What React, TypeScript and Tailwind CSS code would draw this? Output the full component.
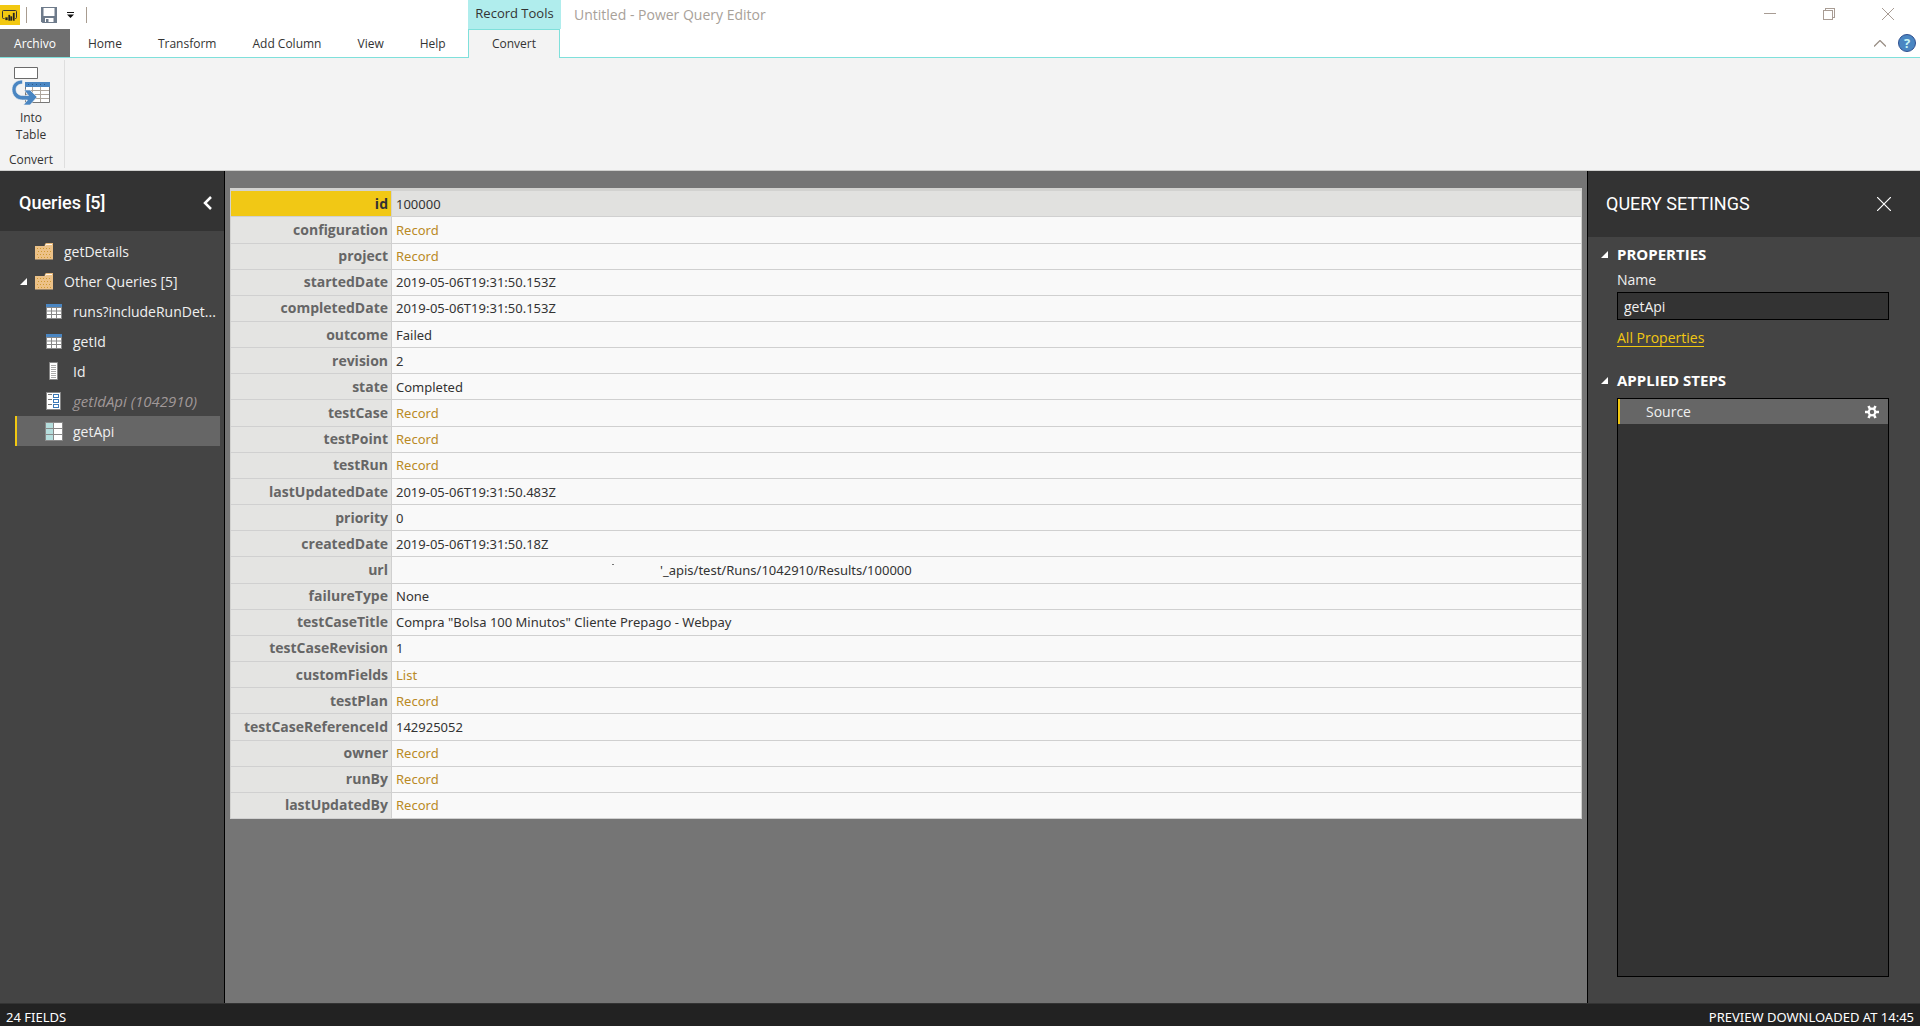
import { useState } from 'react'
import type { ReactNode } from 'react'
import clsx from 'clsx'

type Kind = 'text' | 'link' | 'url'

interface FieldRow {
  name: string
  value: string
  kind?: Kind
}

const FIELDS: FieldRow[] = [
  { name: 'id', value: '100000' },
  { name: 'configuration', value: 'Record', kind: 'link' },
  { name: 'project', value: 'Record', kind: 'link' },
  { name: 'startedDate', value: '2019-05-06T19:31:50.153Z' },
  { name: 'completedDate', value: '2019-05-06T19:31:50.153Z' },
  { name: 'outcome', value: 'Failed' },
  { name: 'revision', value: '2' },
  { name: 'state', value: 'Completed' },
  { name: 'testCase', value: 'Record', kind: 'link' },
  { name: 'testPoint', value: 'Record', kind: 'link' },
  { name: 'testRun', value: 'Record', kind: 'link' },
  { name: 'lastUpdatedDate', value: '2019-05-06T19:31:50.483Z' },
  { name: 'priority', value: '0' },
  { name: 'createdDate', value: '2019-05-06T19:31:50.18Z' },
  { name: 'url', value: '_apis/test/Runs/1042910/Results/100000', kind: 'url' },
  { name: 'failureType', value: 'None' },
  { name: 'testCaseTitle', value: 'Compra "Bolsa 100 Minutos" Cliente Prepago - Webpay' },
  { name: 'testCaseRevision', value: '1' },
  { name: 'customFields', value: 'List', kind: 'link' },
  { name: 'testPlan', value: 'Record', kind: 'link' },
  { name: 'testCaseReferenceId', value: '142925052' },
  { name: 'owner', value: 'Record', kind: 'link' },
  { name: 'runBy', value: 'Record', kind: 'link' },
  { name: 'lastUpdatedBy', value: 'Record', kind: 'link' },
]

const TABS = ['Home', 'Transform', 'Add Column', 'View', 'Help']

function LogoIcon() {
  return (
    <svg className="size-5 shrink-0" viewBox="0 0 20 20" fill="none">
      <path d="M0 0h20v20H0z" fill="#f2c811" />
      <path d="M4.500 13.500h-1a1 1 0 0 1-1-1v-6a1 1 0 0 1 1-1h12a1 1 0 0 1 1 1v6a1 1 0 0 1-1 1h-.5" stroke="#333" />
      <path d="M5.500 12.500h2V15h-2zM8.500 10H10v5.500H8.500zM10.500 11.500H12v4h-1.500zM13 8h1.500v7.500H13z" fill="#222" stroke="#222" strokeWidth=".3" />
    </svg>
  )
}

function SaveIcon() {
  return (
    <svg className="size-4" viewBox="0 0 16 16">
      <path d="M0 0h16v16H1.500L0 14.500z" fill="#6e7b8b" />
      <path d="M2.500 1h11v8h-11z" fill="#fff" />
      <path d="M4 11h8.500v4H4z" fill="#fff" />
      <path d="M5 12h2.500v3H5z" fill="#6e7b8b" />
    </svg>
  )
}

function IntoTableIcon() {
  return (
    <svg className="h-[38px] w-[40px]" viewBox="0 0 40 38" fill="none">
      <path d="M3.500.5h23v11h-23z" fill="#fff" stroke="#6b6b6b" />
      <path d="M14.500 15.500h24v20h-24z" fill="#fff" stroke="#777" />
      <path d="M14 15h25v5H14z" fill="#4a86c2" />
      <path d="M17 17.500h20" stroke="#2f5a8a" strokeDasharray="1 3" />
      <path d="M15 23.500h23M15 27.500h23M15 31.500h23M21.500 20v15M29.500 20v15" stroke="#b0a79d" />
      <path
        d="M11.500 13C5 13 1 17 1 22.500S5 33 11.500 33h5L12.500 38h6.500l7-8-7-7h-6l4.500 5.500h-6C7.500 28.500 5 26 5 22.500S7.500 17 11.500 17z"
        fill="#4a86c2"
        stroke="#f3f3f3"
        strokeWidth=".6"
      />
    </svg>
  )
}

function FolderIcon() {
  return (
    <svg className="h-[17px] w-[18px]" viewBox="0 0 18 17">
      <path d="M10 1l1-1h7v5H9z" fill="#e8b878" />
      <path d="M11 1h6v2h-7z" fill="#fff8ee" />
      <path d="M0 3h10l1.500-1H18v14.500H0z" fill="#ecc187" />
      <path d="M2 5.500h15M3 8.500h14M2 11.500h15M3 14.500h14" stroke="#cf9a30" strokeDasharray="1 2" />
    </svg>
  )
}

function TableIcon() {
  return (
    <svg className="h-[15px] w-4" viewBox="0 0 16 15">
      <path d="M0 0h16v15H0z" fill="#888" />
      <path d="M0 0h16v3H0z" fill="#4a86c2" />
      <path d="M1 4h4v2.500H1zM6 4h4v2.500H6zM11 4h4v2.500h-4zM1 7.500h4V10H1zM6 7.500h4V10H6zM11 7.500h4V10h-4zM1 11h4v3H1zM6 11h4v3H6zM11 11h4v3h-4z" fill="#fff" />
    </svg>
  )
}

function ListIcon() {
  return (
    <svg className="h-[18px] w-[9px]" viewBox="0 0 9 18">
      <path d="M.5.5h8v17h-8z" fill="#fff" stroke="#888" />
      <path d="M2 3.500h5M2 5.500h5M2 7.500h5M2 9.500h5M2 11.500h5M2 13.500h5M2 15.500h5" stroke="#aaa" />
    </svg>
  )
}

function ParameterIcon() {
  return (
    <svg className="h-[18px] w-[15px]" viewBox="0 0 15 18" fill="none" shapeRendering="crispEdges">
      <path d="M.5.5h14v17H.5z" fill="#fff" stroke="#888" />
      <path d="M2 2.500h4M2 7.500h4M2 12.500h4" stroke="#777" />
      <path d="M7.500 2.500h5v3h-5zM7.500 7.500h5v3h-5zM7.500 12.500h5v3h-5z" stroke="#3d7ab8" />
    </svg>
  )
}

function RecordIcon() {
  return (
    <svg className="h-[19px] w-[18px]" viewBox="0 0 18 19">
      <path d="M0 0h18v19H0z" fill="#888" />
      <path d="M1 1h7v5H1zM1 7h7v5H1zM1 13h7v5H1z" fill="#b5dedd" />
      <path d="M9 1h8v5H9zM9 7h8v5H9zM9 13h8v5H9z" fill="#fff" />
    </svg>
  )
}

function Caret() {
  return (
    <svg className="size-[7px] shrink-0" viewBox="0 0 7 7">
      <path d="M7 0v7H0z" fill="#fff" />
    </svg>
  )
}

function GearIcon() {
  return (
    <svg className="size-[14px]" viewBox="0 0 14 14" fill="none" stroke="#fff">
      <circle cx="7" cy="7" r="3.300" strokeWidth="2.200" />
      <path d="M0 7h3M11 7h3M3.500 1l1.500 3M9 10l1.500 3M10.500 1L9 4M5 10l-1.500 3" strokeWidth="2.600" />
    </svg>
  )
}

function IconButton({ label, className, children }: { label: string; className?: string; children: ReactNode }) {
  return (
    <button type="button" aria-label={label} className={clsx('flex items-center justify-center', className)}>
      {children}
    </button>
  )
}

function Header() {
  return (
    <header className="grid shrink-0 grid-cols-[468px_93px_1fr] grid-rows-[29px_29px] bg-white text-xs text-[#333]">
      <div className="flex items-center">
        <LogoIcon />
        <span className="ml-1.5 h-4 w-px bg-[#a89c90]" />
        <IconButton label="Save" className="ml-3.5">
          <SaveIcon />
        </IconButton>
        <IconButton label="Customize toolbar" className="ml-2.5 h-4">
          <svg className="h-[6px] w-[7px]" viewBox="0 0 7 6">
            <path d="M0 0h7v1H0zM0 2.500h7L3.500 6z" fill="#111" />
          </svg>
        </IconButton>
        <span className="ml-3 h-4 w-px bg-[#a89c90]" />
      </div>
      <div className="flex items-center justify-center bg-[#b0eded] pb-0.5 text-[13px]">Record Tools</div>
      <div className="flex items-start justify-between pr-[3px] pl-[13px]">
        <h1 className="text-sm leading-[29px] text-[#a8a199]">Untitled - Power Query Editor</h1>
        <div className="flex">
          <IconButton label="Minimize" className="h-7 w-[59px]">
            <svg className="size-3" viewBox="0 0 12 12" stroke="#a89c94">
              <path d="M0 5.500h12" />
            </svg>
          </IconButton>
          <IconButton label="Restore" className="h-7 w-[59px]">
            <svg className="size-3" viewBox="0 0 12 12" stroke="#a89c94" fill="none" shapeRendering="crispEdges">
              <path d="M.5 2.500h9v9h-9zM2.500 2.500v-2h9v9h-2" />
            </svg>
          </IconButton>
          <IconButton label="Close" className="h-7 w-[59px]">
            <svg className="size-3" viewBox="0 0 12 12" stroke="#a89c94">
              <path d="M0 0l12 12M12 0L0 12" />
            </svg>
          </IconButton>
        </div>
      </div>

      <nav className="flex border-b border-[#7fe0db]">
        <button type="button" className="w-[70px] shrink-0 bg-[#6f6f6f] pt-0.5 text-white">Archivo</button>
        {TABS.map((t) => (
          <button key={t} type="button" className="shrink-0 px-[18px] pt-0.5 whitespace-nowrap">{t}</button>
        ))}
      </nav>
      <button type="button" className="mr-px border-x border-t border-[#7fe0db] bg-[#f3f3f3]">
        Convert
      </button>
      <div className="-ml-px flex items-center justify-end gap-3 border-b border-[#7fe0db] pr-1">
        <IconButton label="Collapse ribbon">
          <svg className="h-[7px] w-3" viewBox="0 0 12 7" fill="none" stroke="#9a8f86" strokeWidth="1.300">
            <path d="M0 6.500l6-6 6 6" />
          </svg>
        </IconButton>
        <IconButton label="Help" className="size-[18px] rounded-full border border-[#2f4f8f] bg-[#4a86c2] text-[13px] leading-none font-bold text-[#c9f5f5]">
          ?
        </IconButton>
      </div>
    </header>
  )
}

function Ribbon() {
  return (
    <section className="flex h-[113px] shrink-0 border-b border-[#d0d0ce] bg-[#f3f3f3] py-0.5 text-xs text-[#333]">
      <div className="flex w-[65px] flex-col items-center justify-between border-r border-[#dedede] pr-0.5">
        <button type="button" className="flex flex-col items-center gap-1 pt-[7px] leading-[17px]">
          <IntoTableIcon />
          <span>Into<br />Table</span>
        </button>
        <span className="leading-[17px]">Convert</span>
      </div>
    </section>
  )
}

const QUERIES = [
  { name: 'runs?includeRunDet...', icon: <TableIcon /> },
  { name: 'getId', icon: <TableIcon /> },
  { name: 'Id', icon: <ListIcon /> },
  { name: 'getIdApi (1042910)', icon: <ParameterIcon />, muted: true },
  { name: 'getApi', icon: <RecordIcon /> },
]

function QueriesPane() {
  const [selected, setSelected] = useState('getApi')
  return (
    <aside className="w-[225px] shrink-0 border-r border-black bg-[#444] text-sm text-[#f0f0f0]">
      <div className="flex h-[60px] items-center justify-between bg-[#333] pt-1 pr-3 pl-[19px]">
        <h2 className="font-[Roboto] text-lg font-medium text-white">Queries [5]</h2>
        <IconButton label="Collapse queries">
          <svg className="h-[14px] w-[9px]" viewBox="0 0 9 14" fill="none" stroke="#fff" strokeWidth="2.500">
            <path d="M8 1L2 7l6 6" />
          </svg>
        </IconButton>
      </div>
      <ul className="pt-[5px] pr-1">
        <li className="flex h-[30px] items-center pl-[35px]">
          <FolderIcon />
          <span className="ml-[11px] pt-0.5">getDetails</span>
        </li>
        <li>
          <div className="flex h-[30px] items-center pl-5">
            <Caret />
            <span className="ml-2"><FolderIcon /></span>
            <span className="ml-[11px] pt-0.5">Other Queries [5]</span>
          </div>
          <ul className="pl-[15px]">
            {QUERIES.map((q) => (
              <li key={q.name}>
                <button
                  type="button"
                  onClick={() => setSelected(q.name)}
                  className={clsx(
                    'flex h-[30px] w-full items-center border-l-2 pl-[27px] text-left whitespace-nowrap',
                    q.name === selected ? 'border-[#f2c811] bg-[#666]' : 'border-transparent',
                    q.muted && 'text-[15px] text-[#a09898] italic',
                  )}
                >
                  <span className="flex w-[19px] shrink-0 justify-center">{q.icon}</span>
                  <span className="ml-2.5 pt-0.5">{q.name}</span>
                </button>
              </li>
            ))}
          </ul>
        </li>
      </ul>
    </aside>
  )
}

function FieldValue({ field }: { field: FieldRow }) {
  if (field.kind === 'link') {
    return <a href="#" className="text-[#b98a26]">{field.value}</a>
  }
  if (field.kind === 'url') {
    return (
      <span className="flex pl-[216px]">
        <span className="mt-1 h-px w-0.5 bg-[#777]" />
        <span className="pl-[46px]">'{field.value}</span>
      </span>
    )
  }
  return <>{field.value}</>
}

function RecordTable() {
  return (
    <main className="min-w-0 flex-1 bg-[#757575] px-[5px] pt-[17px]">
      <table className="h-[631px] w-full border-collapse border border-t-[3px] border-[#d2d2d0] text-[#333]">
        <tbody>
          {FIELDS.map((f, i) => (
            <tr key={f.name} className="border-b border-[#d0d0d0]">
              <th
                scope="row"
                className={clsx(
                  'w-[161px] border-r border-[#d0d0d0] p-0 pr-[3px] text-right text-sm leading-5 font-bold',
                  i === 0 ? 'bg-[#f1c815] text-[#333]' : 'bg-[#e4e4e2] text-[#666]',
                )}
              >
                {f.name}
              </th>
              <td
                className={clsx(
                  "p-0 pl-1 font-['Noto_Sans',sans-serif] text-[13px] leading-5",
                  i === 0 ? 'bg-[#e1e1df]' : 'bg-[#f9f9f9]',
                )}
              >
                <FieldValue field={f} />
              </td>
            </tr>
          ))}
        </tbody>
      </table>
    </main>
  )
}

function SettingsPane() {
  const [name, setName] = useState('getApi')
  return (
    <aside className="flex w-[333px] shrink-0 flex-col border-l border-black bg-[#444] text-sm text-[#f0f0f0]">
      <div className="flex h-[66px] shrink-0 items-center justify-between bg-[#333] pr-[29px] pl-[18px]">
        <h2 className="font-[Roboto] text-lg text-white">QUERY SETTINGS</h2>
        <IconButton label="Close settings">
          <svg className="size-[14px]" viewBox="0 0 14 14" stroke="#fff" strokeWidth="1.200">
            <path d="M0 0l14 14M14 0L0 14" />
          </svg>
        </IconButton>
      </div>
      <div className="flex flex-1 flex-col pt-1.5 pr-[31px] pb-[26px] pl-[29px]">
        <h3 className="-ml-4 flex items-center gap-[9px] text-[15px] leading-[22px] font-bold text-white">
          <Caret />
          PROPERTIES
        </h3>
        <label htmlFor="query-name" className="pt-0.5 leading-[25px]">Name</label>
        <input
          id="query-name"
          value={name}
          onChange={(e) => setName(e.target.value)}
          className="h-7 border border-black bg-[#333] px-1.5"
        />
        <a href="#" className="mt-2 self-start border-b border-[#f2c811] pt-0.5 leading-4 text-[#f2c811]">All Properties</a>
        <h3 className="mt-[22px] -ml-4 flex items-center gap-[9px] text-[15px] leading-[22px] font-bold text-white">
          <Caret />
          APPLIED STEPS
        </h3>
        <ul className="mt-[7px] flex-1 border border-black bg-[#333]">
          <li className="flex h-[25px] items-center justify-between border-l-2 border-[#f2c811] bg-[#666] pr-[9px] pl-[26px]">
            <button type="button">Source</button>
            <IconButton label="Edit settings">
              <GearIcon />
            </IconButton>
          </li>
        </ul>
      </div>
    </aside>
  )
}

export default function App() {
  return (
    <div className="flex h-screen flex-col overflow-hidden bg-[#444] font-['Open_Sans',sans-serif]">
      <Header />
      <Ribbon />
      <div className="flex min-h-0 flex-1">
        <QueriesPane />
        <RecordTable />
        <SettingsPane />
      </div>
      <footer className="flex h-[23px] shrink-0 items-center justify-between border-t border-[#333] bg-[#222] px-1.5 pt-1 font-['Noto_Sans',sans-serif] text-[13px] leading-4 text-white">
        <span>{FIELDS.length} FIELDS</span>
        <span>PREVIEW DOWNLOADED AT 14:45</span>
      </footer>
    </div>
  )
}
